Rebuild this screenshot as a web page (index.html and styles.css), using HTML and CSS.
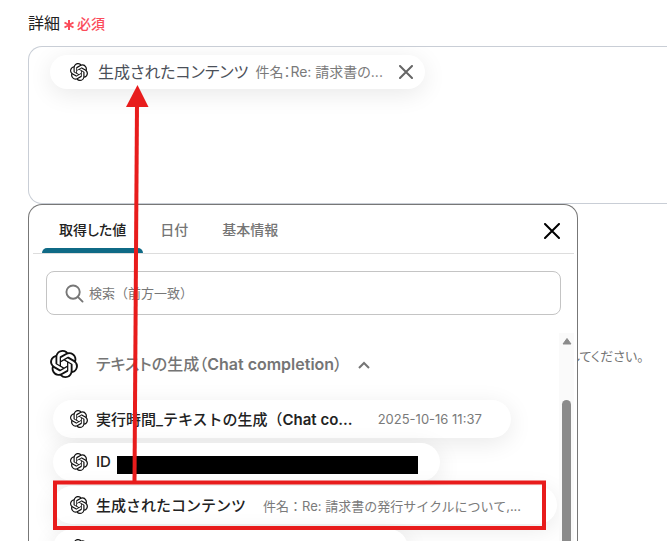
FILE: index.html
```html
<!DOCTYPE html>
<html lang="ja">
<head>
<meta charset="utf-8">
<title>詳細</title>
<link rel="stylesheet" href="styles.css">
</head>
<body>
<svg class="defs" aria-hidden="true">
  <symbol id="knot" viewBox="0 0 24 24"><path d="M22.2819 9.8211a5.9847 5.9847 0 0 0-.5157-4.9108 6.0462 6.0462 0 0 0-6.5098-2.9A6.0651 6.0651 0 0 0 4.9807 4.1818a5.9847 5.9847 0 0 0-3.9977 2.9 6.0462 6.0462 0 0 0 .7427 7.0966 5.98 5.98 0 0 0 .511 4.9107 6.051 6.051 0 0 0 6.5146 2.9001A5.9847 5.9847 0 0 0 13.2599 24a6.0557 6.0557 0 0 0 5.7718-4.2058 5.9894 5.9894 0 0 0 3.9977-2.9001 6.0557 6.0557 0 0 0-.7475-7.0729zm-9.022 12.6081a4.4755 4.4755 0 0 1-2.8764-1.0408l.1419-.0804 4.7783-2.7582a.7948.7948 0 0 0 .3927-.6813v-6.7369l2.02 1.1686a.071.071 0 0 1 .038.052v5.5826a4.504 4.504 0 0 1-4.4945 4.4944zm-9.6607-4.1254a4.4708 4.4708 0 0 1-.5346-3.0137l.142.0852 4.783 2.7582a.7712.7712 0 0 0 .7806 0l5.8428-3.3685v2.3324a.0804.0804 0 0 1-.0332.0615L9.74 19.9502a4.4992 4.4992 0 0 1-6.1408-1.6464zM2.3408 7.8956a4.485 4.485 0 0 1 2.3655-1.9728V11.6a.7664.7664 0 0 0 .3879.6765l5.8144 3.3543-2.0201 1.1685a.0757.0757 0 0 1-.071 0l-4.8303-2.7865A4.504 4.504 0 0 1 2.3408 7.872zm16.5963 3.8558L13.1038 8.364 15.1192 7.2a.0757.0757 0 0 1 .071 0l4.8303 2.7913a4.4944 4.4944 0 0 1-.6765 8.1042v-5.6772a.79.79 0 0 0-.407-.667zm2.0107-3.0231l-.142-.0852-4.7735-2.7818a.7759.7759 0 0 0-.7854 0L9.409 9.2297V6.8974a.0662.0662 0 0 1 .0284-.0615l4.8303-2.7866a4.4992 4.4992 0 0 1 6.6802 4.66zM8.3065 12.863l-2.02-1.1638a.0804.0804 0 0 1-.038-.0567V6.0742a4.4992 4.4992 0 0 1 7.3757-3.4537l-.142.0805L8.704 5.459a.7948.7948 0 0 0-.3927.6813zm1.0976-2.3654l2.602-1.4998 2.6069 1.4998v2.9994l-2.5974 1.4997-2.6067-1.4997Z"/></symbol>
</svg>
<main class="page">
  <div class="label-row">
    <span class="label" id="detail-label">詳細</span>
    <span class="required"><svg class="star" viewBox="0 0 12 14" aria-hidden="true"><path d="M6 3v10M1.500 5.500l9 5M10.500 5.500l-9 5"/></svg>必須</span>
  </div>

  <div class="field" role="group" aria-labelledby="detail-label">
    <div class="chip">
      <svg class="logo"><use href="#knot"/></svg>
      <span class="chip-title">生成されたコンテンツ</span>
      <span class="note chip-note">件名：Re: 請求書の...</span>
      <button class="icon-button chip-remove" type="button" aria-label="削除"><svg viewBox="0 0 14 14"><path d="M1 1l12 12M13 1L1 13"/></svg></button>
    </div>
  </div>

  <div class="lower">
    <section class="panel">
      <div class="tabs" role="tablist">
        <button class="tab selected" type="button" role="tab" aria-selected="true">取得した値</button>
        <button class="tab" type="button" role="tab" aria-selected="false">日付</button>
        <button class="tab" type="button" role="tab" aria-selected="false">基本情報</button>
        <button class="icon-button panel-close" type="button" aria-label="閉じる"><svg viewBox="0 0 16 16"><path d="M1 1l14 14M15 1L1 15"/></svg></button>
      </div>
      <label class="search">
        <svg class="lens" viewBox="0 0 20 20" aria-hidden="true"><circle cx="8.500" cy="8.500" r="7"/><path d="M13.500 13.500l5 5"/></svg>
        <input type="text" placeholder="検索（前方一致）" aria-label="検索（前方一致）">
      </label>
      <div class="scroller">
        <div class="results">
          <button class="group-head" type="button" aria-expanded="true">
            <svg class="logo logo-large"><use href="#knot"/></svg>
            <span class="group-title">テキストの生成（<span class="latin">Chat completion</span>）</span>
            <svg class="chevron" viewBox="0 0 12 8" aria-hidden="true"><path d="M1 7l5-5 5 5"/></svg>
          </button>
          <ul class="items">
            <li><button class="item" type="button"><svg class="logo"><use href="#knot"/></svg><span class="item-title">実行時間_テキストの生成（<span class="latin">Chat co...</span></span><span class="note">2025-10-16 11:37</span></button></li>
            <li><button class="item item-masked" type="button"><svg class="logo"><use href="#knot"/></svg><span class="item-title latin">ID</span><span class="mask"></span></button></li>
            <li><button class="item item-noted" type="button"><svg class="logo"><use href="#knot"/></svg><span class="item-title">生成されたコンテンツ</span><span class="note">件名：Re: 請求書の発行サイクルについて,...</span></button></li>
            <li><button class="item item-last" type="button"><svg class="logo"><use href="#knot"/></svg></button></li>
          </ul>
        </div>
        <div class="track" aria-hidden="true">
          <svg class="track-up" viewBox="0 0 10 8"><path d="M5 1.500L9 7H1z"/></svg>
          <div class="thumb"></div>
        </div>
      </div>
    </section>
    <p class="help">してください。</p>
  </div>

  <svg class="annotation" width="667" height="541" viewBox="0 0 667 541" aria-hidden="true">
    <rect x="55" y="482.500" width="489" height="45.500" fill="none" stroke="#e81c1c" stroke-width="4"/>
    <path d="M137 104L134.500 482" stroke="#e81c1c" stroke-width="4"/>
    <path d="M137.500 85L148.500 107h-22.500z" fill="#e81c1c"/>
  </svg>
</main>
</body>
</html>
```
FILE: styles.css
```css
* { box-sizing: border-box; }

body {
  margin: 0;
  background: #fff;
  color: #222;
  font-family: Inter, "Noto Sans CJK JP", sans-serif;
  font-size: 13px;
}

button {
  margin: 0;
  padding: 0;
  border: 0;
  background: none;
  color: inherit;
  font: inherit;
}

.defs { display: none; }

.page {
  position: relative;
  display: flex;
  flex-direction: column;
  height: 100vh;
  padding-left: 28px;
  overflow: hidden;
}

.label-row {
  display: flex;
  align-items: center;
  gap: 3px;
  height: 46px;
  padding-bottom: 2px;
  flex: none;
}

.label { font-size: 16px; }

.required {
  display: flex;
  align-items: center;
  gap: 2px;
  padding-top: 2px;
  color: #fb4b5a;
  font-size: 14px;
  font-weight: 500;
}

.star {
  width: 12px;
  height: 14px;
  margin-top: 2px;
  fill: none;
  stroke: currentColor;
  stroke-width: 2;
}

.field {
  flex: none;
  height: 158px;
  padding: 8px 21px;
  border: 1px solid #c9ced6;
  border-right: 0;
  border-radius: 14px 0 0 14px;
  overflow: hidden;
}

.chip {
  display: inline-flex;
  align-items: center;
  height: 34px;
  padding: 0 12px 0 20px;
  border-radius: 17px;
  background: #fff;
  box-shadow: 0 5px 24px rgba(0, 0, 0, 0.09);
}

.logo {
  flex: none;
  width: 18px;
  height: 18px;
  fill: #111;
}

.chip-title {
  margin: 0 7px 0 10px;
  padding-bottom: 2px;
  color: #4b5059;
  font-size: 16px;
}

.note {
  color: #7a7a7a;
  font-size: 13px;
  font-weight: 400;
}

.chip-note {
  padding-bottom: 2px;
  font-size: 14px;
}

.chip-title,
.chip-note,
.tab,
.group-title,
.help { font-feature-settings: "palt"; }

.latin { font-weight: 600; }

.icon-button {
  display: flex;
  fill: none;
  stroke-linecap: round;
}

.chip-remove {
  margin-left: 16px;
  stroke: #666;
  stroke-width: 2;
}

.chip-remove svg {
  width: 14px;
  height: 14px;
}

.lower {
  display: flex;
  flex: 1;
  min-height: 0;
}

.panel {
  position: relative;
  z-index: 1;
  display: flex;
  flex: 0 1 550px;
  flex-direction: column;
  border: 1px solid #777;
  border-bottom: 0;
  border-radius: 14px 14px 0 0;
  background: #fff;
}

.tabs {
  display: flex;
  flex: none;
  height: 49px;
  margin: 0 3px 0 4px;
  padding: 0 14px 0 9px;
  border-bottom: 1px solid #ddd;
}

.tab {
  display: flex;
  align-items: center;
  padding: 0 17px;
  color: #757575;
  font-size: 14px;
  font-weight: 500;
}

.selected {
  position: relative;
  color: #222;
}

.selected::after {
  content: "";
  position: absolute;
  left: 0;
  right: 0;
  bottom: 0;
  height: 5px;
  border-radius: 5px 5px 0 0;
  background: #0f6a86;
}

.panel-close {
  align-items: center;
  margin-left: auto;
  padding-top: 3px;
  stroke: #000;
  stroke-width: 2;
}

.panel-close svg {
  width: 16px;
  height: 16px;
}

.search {
  display: flex;
  flex: none;
  align-items: center;
  gap: 5px;
  height: 44px;
  margin: 17px 16px 18px 17px;
  padding: 0 18px;
  border: 1px solid #c4c4c4;
  border-radius: 8px;
}

.lens {
  width: 19px;
  height: 19px;
  fill: none;
  stroke: #777;
  stroke-width: 2;
  stroke-linecap: round;
}

.search input {
  flex: 1;
  min-width: 0;
  padding: 0;
  border: 0;
  outline: 0;
  background: none;
  font: inherit;
}

.search input::placeholder { color: #777; }

.scroller {
  display: flex;
  flex: 1;
  min-height: 0;
  padding-right: 3px;
}

.results {
  flex: 1;
  min-width: 0;
  overflow: hidden;
}

.group-head {
  display: flex;
  align-items: center;
  height: 62px;
  padding-left: 21px;
  color: #757575;
  font-size: 16px;
  font-weight: 500;
}

.group-title { padding-bottom: 2px; }

.logo-large {
  width: 28px;
  height: 28px;
  margin-right: 18px;
}

.chevron {
  width: 12px;
  height: 8px;
  margin: 2px 0 0 16px;
  fill: none;
  stroke: #757575;
  stroke-width: 2;
}

.items {
  display: flex;
  flex-direction: column;
  gap: 5px;
  margin: 0;
  padding: 5px 0 0 24px;
  list-style: none;
}

.items li { display: flex; }

.item {
  display: flex;
  align-items: center;
  height: 38px;
  padding: 0 29px 0 17px;
  border-radius: 19px;
  background: #fff;
  box-shadow: 0 5px 24px rgba(0, 0, 0, 0.09);
  white-space: nowrap;
}

.item-title {
  margin-left: 8px;
  padding-bottom: 2px;
  font-size: 15px;
  font-weight: 500;
}

.item .note { margin-left: 25px; }

.item-masked { padding-right: 22px; }

.item-noted { padding-right: 36px; }

.item-noted .note { margin-left: 17px; }

.item-last { width: 355px; }

.mask {
  width: 301px;
  height: 18px;
  margin: 5px 0 0 6px;
  background: #000;
}

.track {
  display: flex;
  flex: none;
  flex-direction: column;
  align-items: center;
  width: 15px;
  padding-top: 4px;
  background: #fafafa;
}

.track-up {
  width: 10px;
  height: 8px;
  fill: #8b8b8b;
  stroke: #8b8b8b;
  stroke-linejoin: round;
}

.thumb {
  flex: 1;
  width: 9px;
  margin-top: 55px;
  border-radius: 5px 5px 0 0;
  background: #8b8b8b;
}

.help {
  flex: none;
  margin: 142px 0 0 -9px;
  color: #757575;
  font-size: 13px;
}

.annotation {
  position: absolute;
  z-index: 2;
  top: 0;
  left: 0;
  pointer-events: none;
}
```
